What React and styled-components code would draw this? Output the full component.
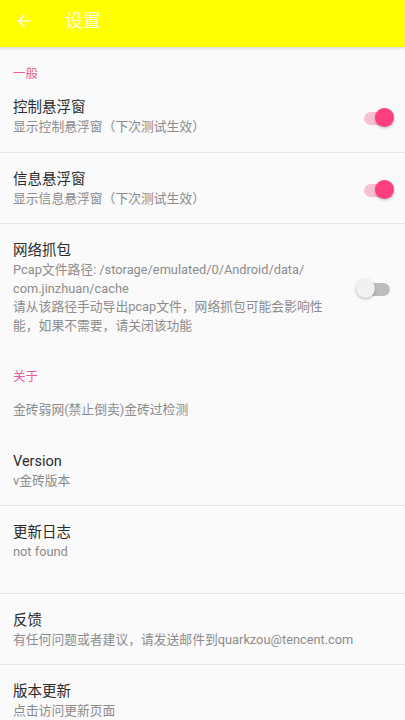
import React from "react";
import styled, { createGlobalStyle } from "styled-components";

const GlobalStyle = createGlobalStyle`
  html, body {
    margin: 0;
    padding: 0;
    background: #fafafa;
  }
  body {
    font-family: Roboto, "Noto Sans CJK SC", "Noto Sans", sans-serif;
  }
`;

const Page = styled.div`
  width: 405px;
  min-height: 720px;
  background: #fafafa;
  overflow: hidden;
`;

const Toolbar = styled.header`
  height: 47px;
  background: #ffff00;
  display: flex;
  align-items: flex-start;
  padding-top: 10px;
  box-sizing: border-box;
  box-shadow: 0 1px 3px rgba(0, 0, 0, 0.18);
  position: relative;
  z-index: 1;
`;

const BackButton = styled.div`
  width: 20px;
  height: 20px;
  margin-left: 14px;
  margin-top: 1px;
  display: flex;
`;

const ToolbarTitle = styled.h1`
  margin: 0 0 0 31px;
  font-size: 18px;
  line-height: 22px;
  font-weight: 400;
  color: #fffbe0;
`;

const Category = styled.div`
  padding: 19px 13px 0;
  height: 34px;
  box-sizing: border-box;
  font-size: 12.5px;
  line-height: 16px;
  color: #ec5b9c;
`;

const Row = styled.div`
  display: flex;
  align-items: center;
  padding: 17px 13px 15px;
  padding-bottom: ${(p) => (p.tall ? "31px" : "15px")};
  border-bottom: ${(p) => (p.divider ? "1px solid #e6e6e6" : "none")};
`;

const Texts = styled.div`
  flex: 1;
  min-width: 0;
`;

const Title = styled.div`
  font-size: 14.5px;
  line-height: 20px;
  color: #2b2b2b;
`;

const Summary = styled.div`
  font-size: 12.8px;
  line-height: 18.5px;
  color: #8c8c8c;
  white-space: ${(p) => (p.pre ? "pre" : "nowrap")};
`;

const SwitchBox = styled.div`
  position: relative;
  width: 32px;
  height: 20px;
  flex: none;
  margin-left: 10px;
  margin-bottom: -2px;
`;

const Track = styled.div`
  position: absolute;
  left: 4px;
  right: 2px;
  top: 4px;
  height: 13px;
  border-radius: 7px;
  background: ${(p) => (p.on ? "#f9bfd4" : "#bdbdbd")};
`;

const Thumb = styled.div`
  position: absolute;
  top: 0;
  left: ${(p) => (p.on ? "15px" : "-4px")};
  width: 19px;
  height: 19px;
  border-radius: 50%;
  background: ${(p) => (p.on ? "#ff3f80" : "#f1f1f1")};
  box-shadow: 0 1px 3px rgba(0, 0, 0, 0.28);
`;

const Switch = ({ on }) => (
  <SwitchBox>
    <Track on={on} />
    <Thumb on={on} />
  </SwitchBox>
);

const ArrowBack = () => (
  <svg width="20" height="20" viewBox="0 0 24 24">
    <path
      fill="#fffbe0"
      d="M20 11H7.83l5.59-5.59L12 4l-8 8 8 8 1.41-1.41L7.83 13H20v-2z"
    />
  </svg>
);

const App = () => {
  return (
    <Page>
      <GlobalStyle />
      <Toolbar>
        <BackButton>
          <ArrowBack />
        </BackButton>
        <ToolbarTitle>设置</ToolbarTitle>
      </Toolbar>

      <Category>一般</Category>
      <Row divider>
        <Texts>
          <Title>控制悬浮窗</Title>
          <Summary>显示控制悬浮窗（下次测试生效）</Summary>
        </Texts>
        <Switch on />
      </Row>
      <Row divider>
        <Texts>
          <Title>信息悬浮窗</Title>
          <Summary>显示信息悬浮窗（下次测试生效）</Summary>
        </Texts>
        <Switch on />
      </Row>
      <Row>
        <Texts>
          <Title>网络抓包</Title>
          <Summary pre>
            {"Pcap文件路径: /storage/emulated/0/Android/data/\ncom.jinzhuan/cache\n请从该路径手动导出pcap文件，网络抓包可能会影响性\n能，如果不需要，请关闭该功能"}
          </Summary>
        </Texts>
        <Switch />
      </Row>

      <Category>关于</Category>
      <Row>
        <Texts>
          <Summary>金砖弱网(禁止倒卖)金砖过检测</Summary>
        </Texts>
      </Row>
      <Row divider>
        <Texts>
          <Title>Version</Title>
          <Summary>v金砖版本</Summary>
        </Texts>
      </Row>
      <Row divider tall>
        <Texts>
          <Title>更新日志</Title>
          <Summary>not found</Summary>
        </Texts>
      </Row>
      <Row divider>
        <Texts>
          <Title>反馈</Title>
          <Summary>有任何问题或者建议，请发送邮件到quarkzou@tencent.com</Summary>
        </Texts>
      </Row>
      <Row>
        <Texts>
          <Title>版本更新</Title>
          <Summary>点击访问更新页面</Summary>
        </Texts>
      </Row>
    </Page>
  );
};

export default App;
